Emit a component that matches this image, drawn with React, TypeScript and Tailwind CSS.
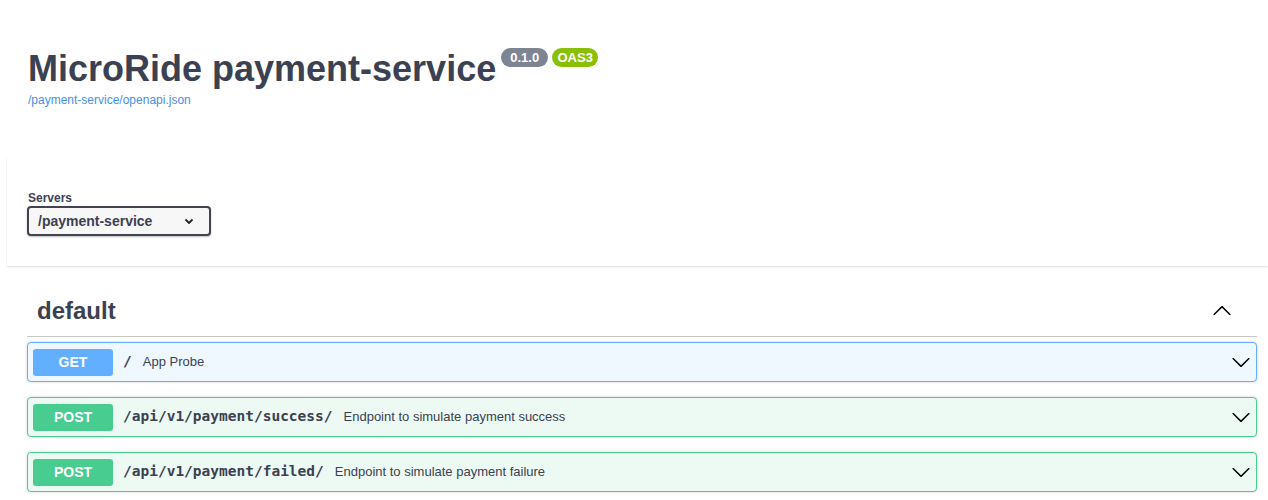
const Chevron = ({ up = false }: { up?: boolean }) => (
    <svg width="20" height="20" viewBox="0 0 20 20" className={up ? 'rotate-180' : ''}>
        <path
            fill="#000"
            d="M17.418 6.109c.272-.268.709-.268.979 0s.271.701 0 .969l-7.908 7.83c-.27.268-.707.268-.979 0l-7.908-7.83c-.27-.268-.27-.701 0-.969.271-.268.709-.268.979 0L10 13.25l7.418-7.141z"
        />
    </svg>
);

const ops = [
    { method: 'GET', path: '/', summary: 'App Probe' },
    { method: 'POST', path: '/api/v1/payment/success/', summary: 'Endpoint to simulate payment success' },
    { method: 'POST', path: '/api/v1/payment/failed/', summary: 'Endpoint to simulate payment failure' },
];

const App = () => {
    return (
        <div className="min-h-[500px] bg-white overflow-hidden text-[#3b4151] font-['Liberation_Sans',Arial,sans-serif]">
            {/* info */}
            <div className="pl-[28px] pt-[48px] mb-[50px]">
                <div className="flex items-start">
                    <h2 className="text-[36px] leading-[41px] font-bold text-[#3b4151]">MicroRide payment-service</h2>
                    <span className="ml-[5px] w-[47px] h-[19px] rounded-full bg-[#7d8492] text-white text-[13px] font-bold leading-[19px] text-center">
                        0.1.0
                    </span>
                    <span className="ml-[4px] w-[46px] h-[19px] rounded-full bg-[#89bf04] text-white text-[13px] font-bold leading-[19px] text-center">
                        OAS3
                    </span>
                </div>
                <a className="block mt-[4px] text-[12px] leading-[14px] text-[#4990e2]">/payment-service/openapi.json</a>
            </div>

            {/* servers */}
            <div className="ml-[7px] bg-white shadow-[0_1px_2px_0_rgba(0,0,0,0.15)] pt-[34px] pb-[30px] pl-[20px]">
                <div className="text-[12px] leading-[14px] font-bold pl-[1px]">Servers</div>
                <div className="mt-[1px] w-[184px] h-[30px] border-2 border-[#41444e] rounded-[4px] bg-[#f7f7f7] shadow-[0_1px_2px_0_rgba(0,0,0,0.25)] flex items-center justify-between pl-[9px] pr-[15px]">
                    <span className="text-[14px] font-bold">/payment-service</span>
                    <svg width="10" height="7" viewBox="0 0 10 7">
                        <path d="M1.5 1.5 L5 5 L8.5 1.5" fill="none" stroke="#222" strokeWidth="1.8" />
                    </svg>
                </div>
            </div>

            {/* tag */}
            <div className="ml-[27px] w-[1230px] mt-[20px]">
                <div className="flex items-center justify-between h-[51px] pl-[10px] pr-[25px] border-b border-[#c4c6cb]">
                    <span className="text-[24px] font-bold leading-[30px]">default</span>
                    <Chevron up />
                </div>
                <div className="mt-[5px]">
                    {ops.map((op) => {
                        const get = op.method === 'GET';
                        return (
                            <div
                                key={op.path}
                                className={`mb-[15px] flex items-center h-[40px] px-[5px] border rounded-[4px] shadow-[0_0_3px_rgba(0,0,0,0.19)] ${
                                    get ? 'border-[#61affe] bg-[#eff7ff]' : 'border-[#49cc90] bg-[#edfaf4]'
                                }`}
                            >
                                <span
                                    className={`w-[80px] h-[27px] rounded-[3px] text-white text-[14px] font-bold flex items-center justify-center ${
                                        get ? 'bg-[#61affe]' : 'bg-[#49cc90]'
                                    }`}
                                >
                                    {op.method}
                                </span>
                                <span className="pl-[10px] pr-[11px] font-['DejaVu_Sans_Mono',monospace] font-bold text-[14.5px] text-[#3b4151]">
                                    {op.path}
                                </span>
                                <span className="text-[13px] text-[#3b4151] flex-1">{op.summary}</span>
                                <Chevron />
                            </div>
                        );
                    })}
                </div>
            </div>
        </div>
    );
};

export default App;
